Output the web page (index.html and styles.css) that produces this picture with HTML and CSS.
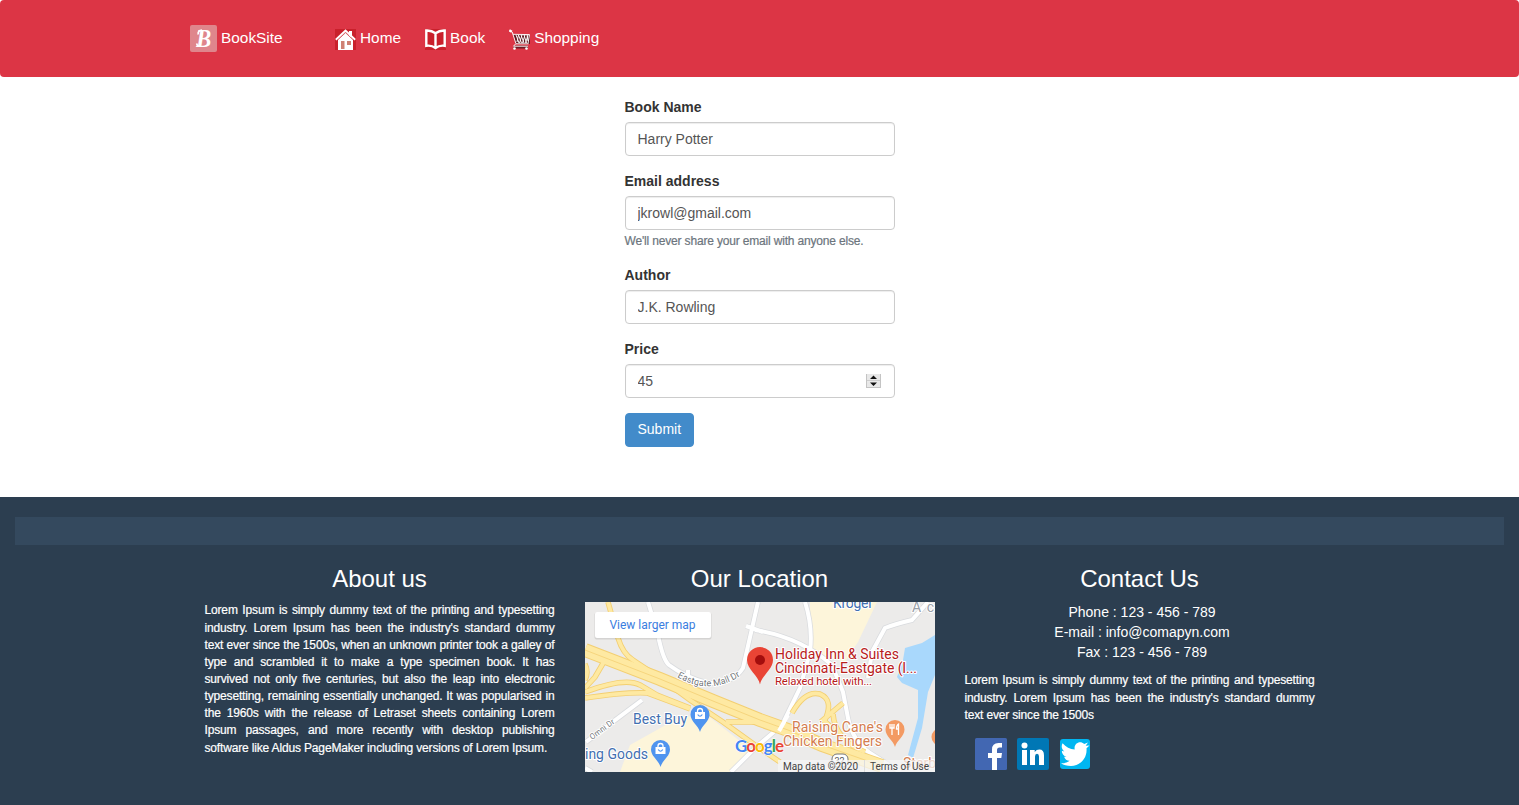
FILE: index.html
```html
<!DOCTYPE html>
<html lang="en">
<head>
<meta charset="utf-8">
<title>BookSite</title>
<link rel="stylesheet" href="styles.css">
</head>
<body>
<nav class="navbar">
  <a class="brand">
    <svg class="logo" width="27" height="27" viewBox="0 0 27 27"><rect width="27" height="27" rx="2" fill="#df868c"/><text x="6.200" y="21.800" textLength="15" lengthAdjust="spacingAndGlyphs" class="logo-letter">B</text><path d="M8.300 9.500Q7.500 5.500 12 5.200M6.800 18.500Q7 21.500 10 21" fill="none" stroke="#fff" stroke-width="1.800"/></svg>
    <span>BookSite</span>
  </a>
  <a class="nav-link">
    <svg width="21" height="21" viewBox="0 0 21 21"><rect width="21" height="21" fill="#c9202b"/><path d="M14 2h3v6h-3zM3 10 10.500 3 18 10v11H3z" fill="#fff"/><path d="M.8 10.800 10.500 1.500 20.200 10.800" fill="none" stroke="#fff" stroke-width="1.900"/><path d="M2.500 11.200 10.500 3.700 18.500 11.200" fill="none" stroke="#c9202b" stroke-width=".7"/><path d="M6 12h3.500v8H6zM12 12h4v4h-4z" fill="#cf8173"/></svg>
    <span>Home</span>
  </a>
  <a class="nav-link">
    <svg width="21" height="21" viewBox="0 0 21 21"><rect width="21" height="21" fill="#c9202b"/><path d="M1.300 1.500Q6.500 1.200 10.500 4.300 14.500 1.200 19.700 1.500V16.800Q14.500 16 10.500 19 6.500 16 1.300 16.800ZM10.500 4V19" fill="none" stroke="#fff" stroke-width="2.400"/></svg>
    <span>Book</span>
  </a>
  <a class="nav-link">
    <svg width="21" height="21" viewBox="0 0 21 21"><path d="M4 5 21 6v9H7z" fill="#5e1720"/><path d="M4.500 18H19" stroke="#6d1c26" stroke-width="3"/><path d="M1 1.500 3.200 3 7 14.800H19.500M4 5.300 20.500 5.600 19 14.500M7 6 10 14M9.500 6 12.500 14M12 6 15 14M15 6 17.500 14M18 6 19 12M8 13 9.500 6M10.500 14 13 6M13.500 14 16 6M16.500 14 19 6M6.500 15 4.500 17.200H19" fill="none" stroke="#fff" stroke-width=".95"/><path d="M.3 1.300 2.800 2.800" stroke="#fff" stroke-width="2.400"/><circle cx="5.500" cy="19.500" r="1.300" fill="#fff"/><circle cx="17.500" cy="19.500" r="1.300" fill="#fff"/></svg>
    <span>Shopping</span>
  </a>
</nav>

<form class="book-form">
  <div class="form-group"><label for="name">Book Name</label><input class="control" id="name" type="text" value="Harry Potter"></div>
  <div class="form-group"><label for="email">Email address</label><input class="control" id="email" type="text" value="jkrowl@gmail.com"><small class="hint">We'll never share your email with anyone else.</small></div>
  <div class="form-group"><label for="author">Author</label><input class="control" id="author" type="text" value="J.K. Rowling"></div>
  <div class="form-group"><label for="price">Price</label>
    <div class="number"><input class="control" id="price" type="text" value="45"><svg class="spinner" width="15" height="14" viewBox="0 0 15 14"><path d="M0 0h15v6.500H0zM0 7.500h15V14H0z" fill="#e8e8e8"/><path d="M.5 0V14M14.500 0V14M0 6.700H15M0 13.500H15" stroke="#c4c4c4"/><path d="M4 5 7.500 1.500 11 5zM4 8.500 7.500 12 11 8.500z" fill="#111"/></svg></div>
  </div>
  <button class="submit" type="button">Submit</button>
</form>

<footer class="footer">
  <div class="strip"></div>
  <div class="columns">
    <section class="column">
      <h3>About us</h3>
      <p class="copy">Lorem Ipsum is simply dummy text of the printing and typesetting industry. Lorem Ipsum has been the industry's standard dummy text&nbsp;ever since the 1500s, when an unknown printer took a galley of type and scrambled it to make a type specimen book. It has survived not only five centuries, but also the leap into electronic typesetting, remaining essentially unchanged. It was popularised in the 1960s with the release of Letraset sheets containing Lorem Ipsum passages, and more recently with desktop publishing software like Aldus PageMaker including versions of Lorem Ipsum.</p>
    </section>
    <section class="column">
      <h3>Our Location</h3>
      <svg class="map" width="350" height="170" viewBox="0 0 350 170">
        <defs>
          <path id="mall" d="M92 75Q126 95 158 72"/>
          <path id="omni" d="M7 138 30 121"/>
          <g id="bag"><path d="M0 17.500C-1.500 11-9.500 7-9.500 0a9.500 9.500 0 0 1 19 0C9.500 7 1.500 11 0 17.500z" fill="#4f94ef"/><path d="M-5-2.500H5V4.500H-5z" fill="#fff"/><path d="M-2.500-2V-3.500a2.500 2.500 0 0 1 5 0V-2" fill="none" stroke="#fff" stroke-width="1.300"/><path d="M-2.300 0Q0 3.500 2.300 0" fill="none" stroke="#4f94ef" stroke-width="1.200"/></g>
        </defs>
        <rect width="350" height="170" fill="#ecebea"/>
        <path d="M225 0H292L273 40 260 60 225 50Z" fill="#fdf5da"/>
        <path d="M35 170 45 143 95 115 122 113 165 147 148 170Z" fill="#fdf5da"/>
        <path d="M350 33 337 41 320 46 318 58 312 75 317 81 333 88V116L323 153 328 156 337 126 343 90 350 73Z" fill="#a9d8fc"/>
        <path d="M63 0 73 33Q78 58 84 63 100 75 122 81 148 82 158 66L173 0M161 24 178 30M103 75V68M1 140 57 98M0 166 7 170M220 0Q228 25 225 50L215 86 197 123 170 146 146 170M170 28Q215 35 247 63L258 90 263 116Q268 140 285 151L315 170M283 76 287 50 300 26Q310 22 327 18L343 0" fill="none" stroke="#d9dbde" stroke-width="5.500"/>
        <path d="M63 0 73 33Q78 58 84 63 100 75 122 81 148 82 158 66L173 0M161 24 178 30M103 75V68M1 140 57 98M0 166 7 170M220 0Q228 25 225 50L215 86 197 123 170 146 146 170M170 28Q215 35 247 63L258 90 263 116Q268 140 285 151L315 170M283 76 287 50 300 26Q310 22 327 18L343 0" fill="none" stroke="#fff" stroke-width="4"/>
        <g fill="none" stroke="#f3cf72">
          <path stroke-width="5.500" d="M23 0 33 36Q38 52 48 58L75 76 105 98 138 120 170 143 195 160M20 58 10 75 0 86M0 90Q40 75 55 83L72 93 105 106M0 96Q40 90 62 91L105 107M0 62Q4 70 0 78M141 120H175M207 111Q220 88 235 92 249 98 240 118M258 101 238 118 250 128M248 112Q250 138 280 150"/>
          <path stroke-width="14" d="M0 48 75 77 128 99 175 118 203 128 237 143 297 164"/>
        </g>
        <g fill="none" stroke="#fee9a2">
          <path stroke-width="3.800" d="M23 0 33 36Q38 52 48 58L75 76 105 98 138 120 170 143 195 160M20 58 10 75 0 86M0 90Q40 75 55 83L72 93 105 106M0 96Q40 90 62 91L105 107M0 62Q4 70 0 78M141 120H175M207 111Q220 88 235 92 249 98 240 118M258 101 238 118 250 128M248 112Q250 138 280 150"/>
          <path stroke-width="12" d="M0 48 75 77 128 99 175 118 203 128 237 143 297 164"/>
        </g>
        <path d="M0 48 75 77 128 99 175 118 203 128 237 143 297 164" fill="none" stroke="#f6d57e" stroke-width="1"/>
        <path d="M194 129 203 113" stroke="#fff" stroke-width="4"/>
        <g class="map-text">
          <text x="248" y="6" textLength="40" class="blue">Kroger</text>
          <text x="327" y="9.500" textLength="22" class="gray">A c</text>
          <text x="48" y="121.500" textLength="54" class="blue">Best Buy</text>
          <text x="0" y="156.500" textLength="63" class="blue">ing Goods</text>
          <text class="street"><textPath href="#mall">Eastgate Mall Dr</textPath></text>
          <text class="street omni"><textPath href="#omni">Omni Dr</textPath></text>
          <text x="190" y="57" textLength="124" class="red">Holiday Inn &amp; Suites</text>
          <text x="190" y="71" textLength="142" class="red">Cincinnati-Eastgate (I...</text>
          <text x="190" y="82.500" textLength="97" class="red sub">Relaxed hotel with...</text>
          <text x="207" y="130" textLength="91" class="orange">Raising Cane's</text>
          <text x="198" y="144" textLength="99" class="orange">Chicken Fingers</text>
          <text x="318" y="166" class="orange">Starb</text>
        </g>
        <rect x="247" y="152" width="16" height="13" rx="5" fill="#fff" stroke="#777"/><text x="249.500" y="162" class="route">32</text>
        <use href="#bag" x="115" y="112.500"/><use href="#bag" x="75.500" y="147.500"/>
        <path d="M310 145c-1.500-6.500-9.500-10.500-9.500-17.500a9.500 9.500 0 0 1 19 0c0 7-8 11-9.500 17.500z" fill="#f39a63"/>
        <path d="M307 122v11M305 122v4h4v-4M313.500 133v-11q-2 1-2 5h2" fill="none" stroke="#fff" stroke-width="1.300"/>
        <circle cx="355" cy="135" r="8.500" fill="#f39a63"/>
        <path d="M175 82.500c-1.500-9-13-15-13-24.500a13 13 0 0 1 26 0c0 9.500-11.500 15.500-13 24.500z" fill="#e94435"/><circle cx="175" cy="58" r="5" fill="#a30d0d"/>
        <text x="150" y="150" textLength="49" class="google"><tspan fill="#4285f4">G</tspan><tspan fill="#ea4335">o</tspan><tspan fill="#fbbc05">o</tspan><tspan fill="#4285f4">g</tspan><tspan fill="#34a853">l</tspan><tspan fill="#ea4335">e</tspan></text>
        <rect x="193" y="158" width="157" height="12" fill="#f5f5f5" fill-opacity=".75"/><path d="M279.500 158v12" stroke="#ddd"/>
        <text x="198" y="167.500" textLength="75" class="legal">Map data ©2020</text><text x="285" y="167.500" textLength="59" class="legal">Terms of Use</text>
        <rect x="9.500" y="10.500" width="117" height="27" rx="2" fill="#000" opacity=".1"/><rect x="10" y="10" width="116" height="26" rx="2" fill="#fff"/>
        <text x="24.500" y="27" textLength="86" class="larger">View larger map</text>
      </svg>
    </section>
    <section class="column">
      <h3>Contact Us</h3>
      <p class="details">Phone : 123 - 456 - 789<br>E-mail : info@comapyn.com<br>Fax : 123 - 456 - 789</p>
      <p class="copy">Lorem Ipsum is simply dummy text of the printing and typesetting industry. Lorem Ipsum has been the industry's standard dummy text&nbsp;ever since the 1500s</p>
      <div class="social">
        <svg width="32" height="32" viewBox="0 0 32 32"><rect width="32" height="32" rx="1.500" fill="#4267b2"/><path d="M17 32V20h-4v-5h4v-3.500Q17 5 23.500 5H27v4.500h-2.500Q22 9.500 22 12v3h5l-.7 5H22v12z" fill="#fff"/></svg>
        <svg width="32" height="32" viewBox="0 0 32 32"><rect width="32" height="32" rx="2" fill="#0077b5"/><circle cx="7.500" cy="7.500" r="3" fill="#fff"/><path d="M5 12h5v15H5zM13 12h4.700v2Q19.500 11.600 22.300 11.600 27 11.600 27 17.500V27h-5v-8.500Q22 15.800 20 15.800 18 15.800 18 18.500V27h-5z" fill="#fff"/></svg>
        <svg class="twitter" width="30" height="30" viewBox="0 0 30 30"><rect width="30" height="30" rx="3" fill="#00b6f1"/><path d="M29.500 6.500 26.500 9.200C27.500 20 19 27 11 27 7 27 3.500 26 1 24.200 4.500 24.500 7.500 23.500 9.600 21.800 6.800 21.700 4.800 20 4.100 17.700H6.600C3.500 17 1.800 14.500 1.800 11.700L4.300 12.400C1.500 10.200 1 7 2.600 4.300 5.800 8 10 10.200 14.700 10.500 13.500 4.500 20 1 24.200 5L28 3.500 25.700 6.700Z" fill="#fff"/></svg>
      </div>
    </section>
  </div>
</footer>
</body>
</html>
```
FILE: styles.css
```css
* { box-sizing: border-box; }
body { margin: 0; font: 14px/20px "Liberation Sans", Arial, sans-serif; color: #333; background: #fff; }
.navbar { display: flex; align-items: center; height: 77px; padding: 0 190px; margin-bottom: 20px; background: #dc3545; border-radius: 4px; color: #fff; font-size: 15.4px; }
.brand, .nav-link { display: flex; align-items: center; gap: 4px; height: 27px; }
.brand { width: 145px; }
.brand span, .nav-link span { margin-top: -1px; }
.nav-link { margin-right: 24px; }
.nav-link svg { margin-top: 2px; }
.logo-letter { font: italic bold 26px "Liberation Serif", serif; fill: #fff; }
.book-form { width: 270px; margin: 0 auto; }
.form-group { margin-bottom: 15px; }
.form-group label { display: block; margin-bottom: 5px; font-weight: bold; }
.control { display: block; width: 100%; height: 34px; padding: 6px 12px; font: inherit; color: #555; background: #fff; border: 1px solid #ccc; border-radius: 4px; box-shadow: inset 0 1px 1px rgba(0,0,0,.075); }
.hint { display: block; padding-top: 1px; margin-bottom: -1px; font-size: 12px; line-height: 20px; color: #6c757d; letter-spacing: -.17px; -webkit-text-stroke: .2px; }
.number { position: relative; }
.spinner { position: absolute; right: 14px; top: 10px; }
.submit { display: block; height: 34px; padding: 5px 12px 7px; font: inherit; color: #fff; background: #428bca; border: 1px solid #428bca; border-radius: 4px; }
.footer { height: 308px; margin-top: 50px; padding: 20px 15px 0; background: #2c3e50; color: #fff; }
.strip { height: 28px; background: #34495e; }
.columns { display: grid; grid-template-columns: repeat(3, 380px); justify-content: center; }
.column { padding: 0 15px; }
h3 { margin: 21px 0 10px; font-size: 24px; font-weight: normal; line-height: 26.4px; text-align: center; }
.copy { margin: 0 0 10px; font-size: 12px; line-height: 17.14px; text-align: justify; letter-spacing: -.16px; -webkit-text-stroke: .2px; }
.details { margin: 0 0 10px; padding-left: 5px; text-align: center; }
.map { display: block; }
.social { display: flex; align-items: center; gap: 10px; padding: 4px 0 0 10px; }
.twitter { margin-left: 1px; }
.map text { font-family: Roboto, sans-serif; }
.map-text text { font-size: 14px; stroke: #fff; stroke-width: 2px; stroke-linejoin: round; paint-order: stroke; }
.map .blue { fill: #426fb1; }
.map .gray { fill: #9aa0a8; }
.map .red { fill: #b8201c; }
.map .sub { font-size: 11.5px; }
.map .orange { fill: #d47d4f; }
.map .street { font-size: 9.2px; fill: #74777b; }
.map .omni { font-size: 8px; }
.map .google { font-family: Lato, sans-serif; font-size: 17px; font-weight: bold; stroke: #fff; stroke-width: 1px; paint-order: stroke; }
.map .legal { font-size: 10px; fill: #444; }
.map .route { font-size: 9px; fill: #555; }
.map .larger { font-size: 12px; fill: #3a7de0; }
```
